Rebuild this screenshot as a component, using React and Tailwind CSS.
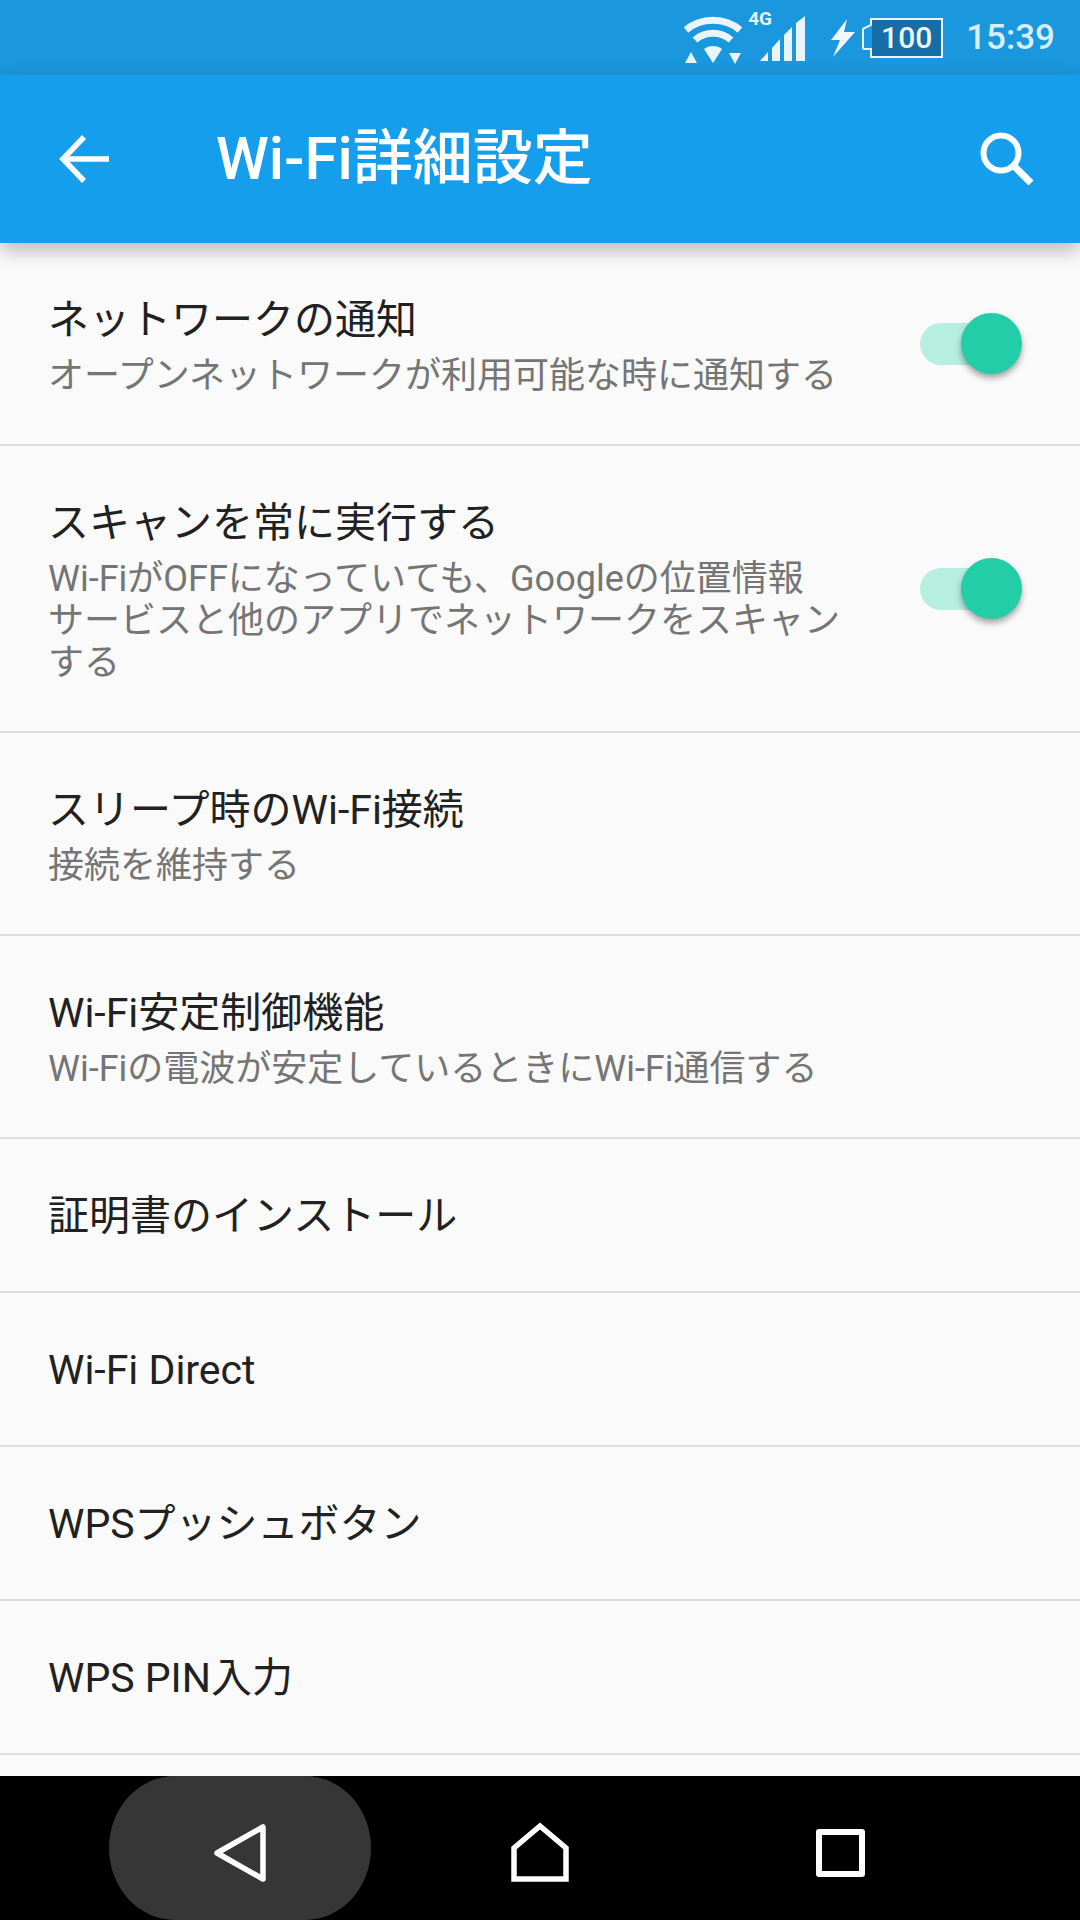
const fontStack = "font-['Roboto','Noto_Sans_CJK_JP',sans-serif]";

const rows = [
  { title: "ネットワークの通知", sub: ["オープンネットワークが利用可能な時に通知する"], h: "h-[203px]", toggle: true },
  {
    title: "スキャンを常に実行する",
    sub: ["Wi-FiがOFFになっていても、Googleの位置情報", "サービスと他のアプリでネットワークをスキャン", "する"],
    h: "h-[287px]",
    toggle: true,
  },
  { title: "スリープ時のWi-Fi接続", sub: ["接続を維持する"], h: "h-[203px]" },
  { title: "Wi-Fi安定制御機能", sub: ["Wi-Fiの電波が安定しているときにWi-Fi通信する"], h: "h-[203px]" },
  { title: "証明書のインストール", h: "h-[154px]" },
  { title: "Wi-Fi Direct", h: "h-[154px]" },
  { title: "WPSプッシュボタン", h: "h-[154px]" },
  { title: "WPS PIN入力", h: "h-[154px]" },
];

function StatusBar() {
  return (
    <div className="h-[75px] bg-[#1b97dd] flex items-center justify-end pr-[25px] text-[#e4f3fb]">
      {/* wifi + arrows */}
      <svg width="60" height="50" viewBox="0 0 60 50" className="mt-[4px]" fill="none">
        <path d="M3 15 C18 2 42 2 57 15" stroke="#e9f5fc" strokeWidth="7" />
        <path d="M12 25 C22 16 38 16 48 25" stroke="#e9f5fc" strokeWidth="7" />
        <path d="M21 34 C26 30 34 30 39 34 L30 48 Z" fill="#e9f5fc" stroke="none" />
        <path d="M2 48 L8 37 L14 48 Z" fill="#e9f5fc" />
        <path d="M46 38 L58 38 L52 49 Z" fill="#e9f5fc" />
      </svg>
      <div className="relative w-[46px] h-[46px] ml-[17px] mt-[2px]">
        <span className="absolute left-[-12px] top-[-7px] text-[19px] leading-[20px] font-bold">4G</span>
        <svg width="46" height="46" viewBox="0 0 46 46" className="absolute left-0 top-0">
          <path d="M0 45 L8 36 L8 45 Z" fill="#e9f5fc" />
          <path d="M12 45 L12 32 L20 23 L20 45 Z" fill="#e9f5fc" />
          <path d="M24 45 L24 19 L32 11 L32 45 Z" fill="#e9f5fc" />
          <path d="M36 45 L36 7 L45 0 L45 45 Z" fill="#e9f5fc" />
        </svg>
      </div>
      <svg width="24" height="38" viewBox="0 0 24 38" className="ml-[25px]">
        <path d="M16 0 L0 21 L9 21 L2 38 L24 13 L13 13 Z" fill="#f2f9fd" />
      </svg>
      <div className="relative w-[81px] h-[40px] ml-[7px] flex items-center justify-center pl-[8px]">
        <svg width="81" height="40" viewBox="0 0 81 40" className="absolute left-0 top-0">
          <path d="M9 1 L80 1 L80 39 L9 39 L9 31 L2 31 Q1 31 1 30 L1 12 Q1 10 3 10 L9 7 Z" fill="none" stroke="#e9f5fc" strokeWidth="2" />
          <rect x="10" y="2" width="69" height="36" fill="#156fa6" />
          <path d="M5 12 L10 9 L10 29 L5 29 Z" fill="#1b97dd" />
        </svg>
        <span className="relative text-[30px] leading-none font-medium text-[#eef7fc]">100</span>
      </div>
      <span className="ml-[23px] text-[35px] leading-none font-medium text-[#d8eefa]">15:39</span>
    </div>
  );
}

function AppBar() {
  return (
    <div className="relative z-10 h-[168px] bg-[#159eec] flex items-center shadow-[0_8px_18px_rgba(0,0,0,0.25)] text-white">
      <svg width="52" height="48" viewBox="0 0 52 48" className="ml-[59px]" fill="none" stroke="white" strokeWidth="5.5">
        <path d="M50 24 L5 24" />
        <path d="M25 2 L4 24 L25 46" />
      </svg>
      <h1 className="ml-[105px] text-[60px] leading-none font-medium">Wi-Fi詳細設定</h1>
      <svg width="54" height="54" viewBox="0 0 54 54" className="ml-auto mr-[46px]" fill="none" stroke="white" strokeWidth="6">
        <circle cx="21" cy="21" r="17.5" />
        <path d="M33 33 L51 51" strokeWidth="7" />
      </svg>
    </div>
  );
}

function Toggle() {
  return (
    <div className="relative w-[102px] h-[61px] shrink-0 flex items-center">
      <div className="w-[92px] h-[42px] rounded-full bg-[#b6eee0]" />
      <div className="absolute right-0 top-0 w-[61px] h-[61px] rounded-full bg-[#22cda7] shadow-[0_4px_6px_rgba(0,0,0,0.35)]" />
    </div>
  );
}

function Row({ title, sub, h, toggle }) {
  return (
    <div className={`${h} flex items-center pl-[48px] pr-[58px] border-b-2 border-[#dddddd]`}>
      <div className={`flex-1 ${sub ? "pt-[4px]" : "pt-[1px]"}`}>
        <div className="text-[41px] leading-[50px] text-[#212121]">{title}</div>
        {sub && (
          <div className="mt-[10px] text-[36px] leading-[42px] text-[#757575] whitespace-nowrap">
            {sub.map((line) => (
              <div key={line}>{line}</div>
            ))}
          </div>
        )}
      </div>
      {toggle && <Toggle />}
    </div>
  );
}

function NavBar() {
  return (
    <div className="h-[144px] bg-black grid grid-cols-3 px-[90px]">
      <div className="flex justify-center">
        <div className="w-[262px] h-[144px] rounded-[66px/72px] bg-[#363636] flex items-center justify-center">
          <svg width="54" height="58" viewBox="0 0 54 58" className="mt-[9px]" fill="none" stroke="white" strokeWidth="5.5" strokeLinejoin="round">
            <path d="M50 3 L50 55 L4 29 Z" />
          </svg>
        </div>
      </div>
      <div className="flex justify-center">
        <svg width="58" height="60" viewBox="0 0 58 60" className="mt-[46px]" fill="none" stroke="white" strokeWidth="5.5" strokeLinejoin="miter">
          <path d="M3 57 L3 26 L29 4 L55 26 L55 57 Z" />
        </svg>
      </div>
      <div className="flex justify-center">
        <div className="mt-[53px] w-[49px] h-[48px] border-[6px] border-white rounded-[3px]" />
      </div>
    </div>
  );
}

export default function App() {
  return (
    <div className={`${fontStack} w-[1080px] h-[1920px] flex flex-col bg-[#fafafa] overflow-hidden`}>
      <StatusBar />
      <AppBar />
      <div className="flex-1">
        {rows.map((r) => (
          <Row key={r.title} {...r} />
        ))}
      </div>
      <NavBar />
    </div>
  );
}
